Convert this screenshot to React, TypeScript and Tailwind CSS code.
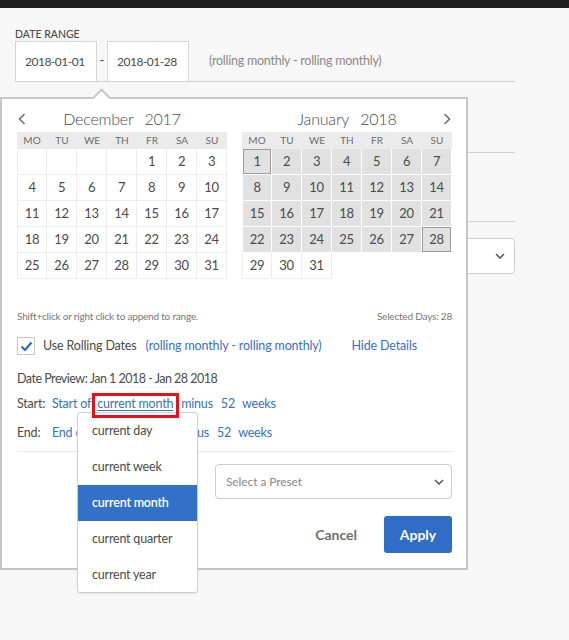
import React from 'react';

const dec = [
  [0, 0, 0, 0, 1, 2, 3],
  [4, 5, 6, 7, 8, 9, 10],
  [11, 12, 13, 14, 15, 16, 17],
  [18, 19, 20, 21, 22, 23, 24],
  [25, 26, 27, 28, 29, 30, 31],
];
const jan = [
  [1, 2, 3, 4, 5, 6, 7],
  [8, 9, 10, 11, 12, 13, 14],
  [15, 16, 17, 18, 19, 20, 21],
  [22, 23, 24, 25, 26, 27, 28],
  [29, 30, 31, 0, 0, 0, 0],
];
const weekdays = ['MO', 'TU', 'WE', 'TH', 'FR', 'SA', 'SU'];

function ChevronLeft() {
  return (
    <svg width="8" height="12" viewBox="0 0 8 12" className="absolute left-[1px] top-[14px]">
      <path d="M6.5 1 L1.5 6 L6.5 11" fill="none" stroke="#6e6e6e" strokeWidth="1.6" />
    </svg>
  );
}
function ChevronRight() {
  return (
    <svg width="8" height="12" viewBox="0 0 8 12" className="absolute right-[1px] top-[14px]">
      <path d="M1.5 1 L6.5 6 L1.5 11" fill="none" stroke="#6e6e6e" strokeWidth="1.6" />
    </svg>
  );
}

function Calendar({
  month,
  year,
  rows,
  range,
  prev,
  next,
}: {
  month: string;
  year: string;
  rows: number[][];
  range: boolean;
  prev?: boolean;
  next?: boolean;
}) {
  return (
    <div className="w-[210px]">
      <div className="relative h-[33px] flex justify-center pt-[9px]">
        {prev && <ChevronLeft />}
        <span className="text-[16px] leading-[21px] font-light tracking-[-0.2px] text-[#4b4b4b]">
          {month}
          <span className="ml-[11px]">{year}</span>
        </span>
        {next && <ChevronRight />}
      </div>
      <div className="grid grid-cols-[repeat(7,30px)] h-[17px] bg-[#ebebeb]">
        {weekdays.map((d) => (
          <div key={d} className="flex items-center justify-center text-[10px] text-[#6b6b6b]">
            {d}
          </div>
        ))}
      </div>
      <div className="grid grid-cols-[repeat(7,30px)]">
        {rows.flatMap((r, ri) =>
          r.map((n, ci) => {
            const first = ci === 0;
            let cls = 'h-[26px] flex items-center justify-center text-[13px] tracking-[-0.3px] text-[#4b4b4b] border-b border-r ';
            if (range) {
              if (n === 0) {
                cls += 'border-transparent';
              } else if (n <= 28) {
                cls += 'bg-[#e1e1e1] border-white ';
                if (first) cls += 'border-l ';
                if (n === 1 || n === 28) cls += 'shadow-[inset_0_0_0_1px_#9c9c9c]';
              } else {
                cls += 'bg-white border-[#ececec] ';
                if (first) cls += 'border-l';
              }
            } else {
              cls += 'border-[#ececec] ';
              if (first) cls += 'border-l';
            }
            return (
              <div key={ri + '-' + ci} className={cls}>
                {n === 0 ? '' : n}
              </div>
            );
          })
        )}
      </div>
    </div>
  );
}

export default function App() {
  const link = 'text-[#3871c1]';
  return (
    <div className="relative w-[569px] h-[640px] overflow-hidden bg-[#f7f7f7] font-['Lato',sans-serif] text-[#4b4b4b]">
      <div className="h-[8px] bg-[#1e1e1e]" />

      {/* background form */}
      <div className="px-[15px] w-[530px]">
        <div className="mt-[20px] text-[10.5px] leading-[13px] font-medium text-[#4b4b4b]">DATE RANGE</div>
        <div className="flex items-end h-[41px] border-b border-[#d2d2d2]">
          <div className="w-[82px] h-[40px] bg-white border-t border-l border-r border-[#d6d6d6] flex items-center pl-[9px] text-[12px] tracking-[-0.5px] text-[#4b4b4b]">
            2018-01-01
          </div>
          <div className="w-[10px] h-[40px] flex items-center justify-center text-[13px]">-</div>
          <div className="w-[82px] h-[40px] bg-white border-t border-l border-r border-[#d6d6d6] flex items-center pl-[9px] text-[12px] tracking-[-0.5px] text-[#4b4b4b]">
            2018-01-28
          </div>
          <div className="h-[40px] flex items-center ml-[20px] text-[12.5px] tracking-[-0.25px] text-[#8a8a8a]">
            (rolling monthly - rolling monthly)
          </div>
        </div>
        <div className="mt-[70px] border-t border-[#d2d2d2]" />
        <div className="mt-[68px] border-t border-[#d2d2d2]" />
        <div className="mt-[16px] h-[36px] bg-white border border-[#cfcfcf] rounded-[4px] flex items-center justify-end pr-[9px]">
          <svg width="10" height="6" viewBox="0 0 10 6">
            <path d="M1 1 L5 5 L9 1" fill="none" stroke="#4b4b4b" strokeWidth="1.4" />
          </svg>
        </div>
      </div>

      {/* popover */}
      <div className="absolute left-0 top-[97px] w-[468px] h-[473px] bg-white border-2 border-[#c6c6c6] pl-[15px] pr-[14px]">
        <div className="absolute left-[93px] top-[-8px] w-[13px] h-[13px] rotate-45 bg-white border-t-2 border-l-2 border-[#c6c6c6]" />
        <div className="relative flex gap-[15px]">
          <Calendar month="December" year="2017" rows={dec} range={false} prev />
          <Calendar month="January" year="2018" rows={jan} range next />
        </div>

        <div className="mt-[30px] flex justify-between text-[10px] tracking-[-0.2px] leading-[14px] text-[#767676]">
          <span>Shift+click or right click to append to range.</span>
          <span>Selected Days: 28</span>
        </div>

        <div className="mt-[14px] h-[18px] flex items-center text-[12.5px] tracking-[-0.15px]">
          <div className="w-[18px] h-[18px] border border-[#c8c8c8] bg-white flex items-center justify-center">
            <svg width="13" height="11" viewBox="0 0 13 11">
              <path d="M1.5 5.5 L5 9 L11.5 1.5" fill="none" stroke="#2f6cc1" strokeWidth="2.2" />
            </svg>
          </div>
          <span className="ml-[8px] text-[#4b4b4b]">Use Rolling Dates</span>
          <span className={`ml-[9px] ${link}`}>(rolling monthly - rolling monthly)</span>
          <span className={`ml-[30px] ${link}`}>Hide Details</span>
        </div>

        <div className="mt-[15px] text-[12.5px] tracking-[-0.5px] leading-[18px]">Date Preview: Jan 1 2018 - Jan 28 2018</div>

        <div className="mt-[7px] flex text-[12.5px] tracking-[-0.2px] leading-[18px]">
          <span className="w-[35px]">Start:</span>
          <span className={link}>Start of</span>
          <span className={`relative ml-[6px] underline underline-offset-2 ${link}`}>
            current month
            <span className="absolute z-10 -left-[5px] -right-[6px] -top-[2px] -bottom-[5px] border-[3px] border-[#e3121a]" />
          </span>
          <span className={`ml-[8px] ${link}`}>minus</span>
          <span className={`ml-[8px] ${link}`}>52</span>
          <span className={`ml-[7px] ${link}`}>weeks</span>
        </div>

        <div className="mt-[11px] flex text-[12.5px] tracking-[-0.2px] leading-[18px]">
          <span className="w-[35px]">End:</span>
          <span className={link}>End of</span>
          <span className={`ml-[7px] ${link}`}>current month</span>
          <span className={`ml-[8px] ${link}`}>minus</span>
          <span className={`ml-[8px] ${link}`}>52</span>
          <span className={`ml-[7px] ${link}`}>weeks</span>
        </div>

        <div className="mt-[9px] border-t border-[#e8e8e8]" />

        <div className="mt-[12px] flex justify-end">
          <div className="w-[237px] h-[35px] border border-[#cdcdcd] rounded-[4px] flex items-center justify-between pl-[10px] pr-[7px]">
            <span className="text-[12px] tracking-[-0.1px] text-[#8a8a8a]">Select a Preset</span>
            <svg width="10" height="6" viewBox="0 0 10 6">
              <path d="M1 1 L5 5 L9 1" fill="none" stroke="#4b4b4b" strokeWidth="1.4" />
            </svg>
          </div>
        </div>

        <div className="mt-[17px] flex justify-end items-center">
          <span className="text-[14px] font-bold text-[#6f6f6f] mr-[27px]">Cancel</span>
          <div className="w-[68px] h-[37px] rounded-[3px] bg-[#2f6dc6] flex items-center justify-center text-[14px] font-bold text-white">
            Apply
          </div>
        </div>
      </div>

      {/* dropdown menu */}
      <div className="absolute left-[77px] top-[412px] w-[121px] h-[181px] bg-white border border-[#cfcfcf] rounded-[3px] shadow-[0_1px_2px_rgba(0,0,0,0.08)] text-[12.5px] tracking-[-0.2px]">
        <div className="h-[36px] flex items-center pl-[14px] text-[#4b4b4b]">current day</div>
        <div className="h-[36px] flex items-center pl-[14px] text-[#4b4b4b]">current week</div>
        <div className="h-[36px] flex items-center pl-[14px] bg-[#3370c7] text-white font-semibold">current month</div>
        <div className="h-[36px] flex items-center pl-[14px] text-[#4b4b4b]">current quarter</div>
        <div className="h-[36px] flex items-center pl-[14px] text-[#4b4b4b]">current year</div>
      </div>
    </div>
  );
}
